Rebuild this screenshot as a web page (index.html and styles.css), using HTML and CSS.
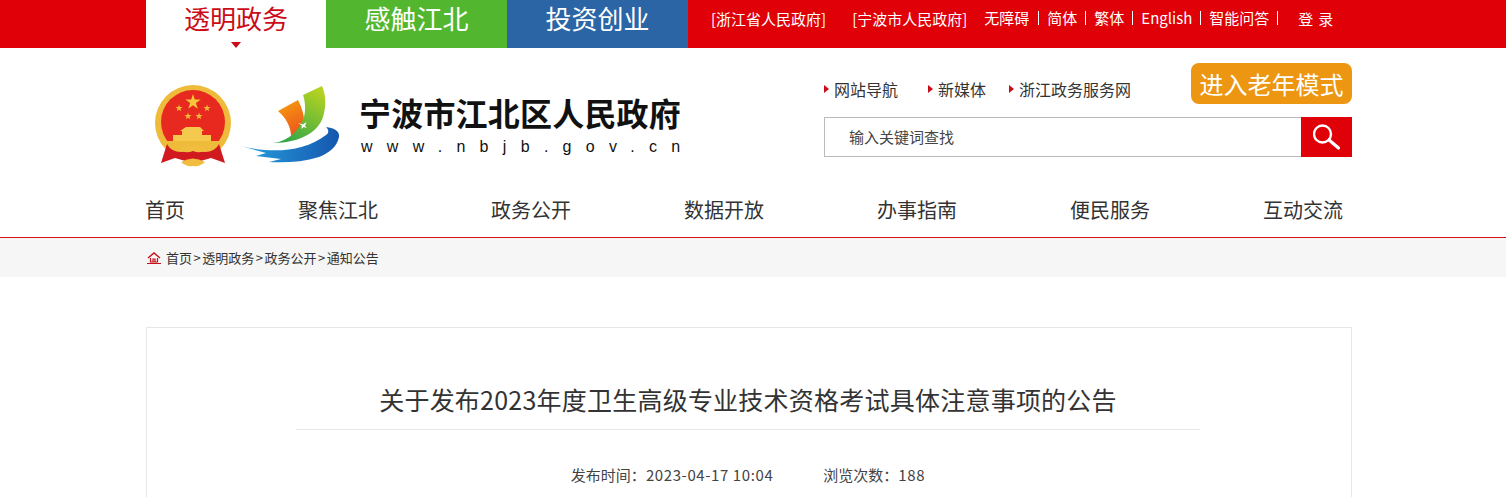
FILE: index.html
```html
<!DOCTYPE html>
<html lang="zh-CN">
<head>
<meta charset="utf-8">
<title>宁波市江北区人民政府</title>
<link rel="stylesheet" href="styles.css">
</head>
<body>
<div class="topbar">
  <div class="wrap topbar-in">
    <div class="tabs">
      <a class="tab tab-active">透明政务<i class="caret"></i></a>
      <a class="tab tab-green">感触江北</a>
      <a class="tab tab-blue">投资创业</a>
    </div>
    <div class="toplinks">
      <a class="gov gov-a">[浙江省人民政府]</a>
      <a class="gov gov-b">[宁波市人民政府]</a>
      <a class="tl">无障碍</a>
      <a class="tl">简体</a>
      <a class="tl">繁体</a>
      <a class="tl">English</a>
      <a class="tl">智能问答</a>
      <a class="login">登 录</a>
    </div>
  </div>
</div>
<header class="wrap head">
  <div class="logo">
    <svg class="emblem" width="80" height="84" viewBox="0 0 80 84">
      <circle cx="40" cy="39" r="38" fill="#efbb3a"/>
      <circle cx="40" cy="38" r="32" fill="#e8291f"/>
      <path d="M40 10 l1.800 5.600 h5.900 l-4.800 3.500 1.800 5.600 -4.700 -3.500 -4.700 3.500 1.800 -5.600 -4.800 -3.500 h5.900 Z" fill="#f6c63a"/>
      <path d="M26 20.500 l.9 2.600 h2.700 l-2.200 1.600 .8 2.600 -2.200 -1.600 -2.200 1.600 .8 -2.600 -2.200 -1.600 h2.700 Z M54 20.500 l.9 2.600 h2.700 l-2.200 1.600 .8 2.600 -2.200 -1.600 -2.200 1.600 .8 -2.600 -2.200 -1.600 h2.700 Z M35 28.500 l.9 2.600 h2.700 l-2.200 1.600 .8 2.600 -2.200 -1.600 -2.200 1.600 .8 -2.600 -2.200 -1.600 h2.700 Z M46 28.500 l.9 2.600 h2.700 l-2.200 1.600 .8 2.600 -2.200 -1.600 -2.200 1.600 .8 -2.600 -2.200 -1.600 h2.700 Z" fill="#f0b93a"/>
      <path d="M33 43 h14 l4 4 h-2 v4 h9 v6 H20 v-6 h9 v-4 h-2 Z" fill="#f5c94d"/>
      <path d="M10 57 H70 C68 62 64 66 60 69 H20 C16 66 12 62 10 57 Z" fill="#efbb3a"/>
      <path d="M14 60 C18 68 28 70 36 66 L44 66 C52 70 62 68 66 60 L72 79 L58 74 L44 78 L36 78 L22 74 L8 79 Z" fill="#d01a20"/>
      <path d="M26 66 q7 -7 14 -3 q7 -4 14 3 q-7 4 -14 1 q-7 3 -14 -1 Z M28 78 q12 -7 24 0 q-5 5 -12 4 q-7 1 -12 -4 Z" fill="#f0bd3f"/>
    </svg>
    <svg class="mark" width="100" height="80" viewBox="0 0 100 80">
      <defs>
        <linearGradient id="sailA" x1="0" y1="0" x2="0.400" y2="1"><stop offset="0" stop-color="#f5a30e"/><stop offset="1" stop-color="#ee5a1b"/></linearGradient>
        <linearGradient id="sailB" x1="0.700" y1="0" x2="0.200" y2="1"><stop offset="0" stop-color="#b4d221"/><stop offset="1" stop-color="#2fa54a"/></linearGradient>
        <linearGradient id="wave" x1="0" y1="0" x2="1" y2="0"><stop offset="0" stop-color="#27a0df"/><stop offset="1" stop-color="#1557ae"/></linearGradient>
      </defs>
      <path d="M37 26 L57 15 C62 25 63 31 63 35 C61 42 56 47 50 51 C50 42 45 33 37 26 Z" fill="url(#sailA)"/>
      <path d="M62 10 L81 1 C85 10 85 20 83 28 C80 46 60 58 32 58 C48 56 58 46 63 32 C65 24 64 16 62 10 Z" fill="url(#sailB)"/>
      <path d="M57 38 l5 1.500 3.500 -2.500 -1.500 4 2 2 -3.500 -1 -2 2 .3 -3.500 Z" fill="#fff"/>
      <path d="M0 61 C28 68 62 68 85 50 C88 48 88 45 85 42 C93 43 99 46 98 52 C96 62 88 68 78 72 C62 77 44 78 28 77 L40 74 L15 71 L25 68 Z" fill="url(#wave)"/>
    </svg>
    <div class="logo-text">
      <div class="logo-cn">宁波市江北区人民政府</div>
      <div class="logo-en">www.nbjb.gov.cn</div>
    </div>
  </div>
  <div class="head-right">
    <div class="quick">
      <div class="quick-links">
        <a class="q q1">网站导航</a>
        <a class="q q2">新媒体</a>
        <a class="q">浙江政务服务网</a>
      </div>
      <a class="elder">进入老年模式</a>
    </div>
    <div class="search">
      <div class="search-input">输入关键词查找</div>
      <div class="search-btn">
        <svg width="28" height="28" viewBox="0 0 28 28" fill="none" stroke="#fff">
          <circle cx="9.500" cy="11" r="8.500" stroke-width="2.400"/>
          <path d="M16 17 L25.500 25" stroke-width="3.200" stroke-linecap="round"/>
        </svg>
      </div>
    </div>
  </div>
</header>
<nav class="wrap nav">
  <a>首页</a><a>聚焦江北</a><a>政务公开</a><a>数据开放</a><a>办事指南</a><a>便民服务</a><a>互动交流</a>
</nav>
<div class="crumbs">
  <div class="wrap crumbs-in">
    <svg class="home" width="14" height="12" viewBox="0 0 14 12" fill="none" stroke="#c4101a">
      <path d="M1 6 L7 1 L13 6" stroke-width="1.400"/>
      <path d="M3.500 6 V10 H10.500 V6 M6 10 V7 H8 V10" stroke-width="1.200"/>
      <path d="M0 11.500 H14" stroke-width="1"/>
    </svg>
    <span>首页<b class="sep">&gt;</b>透明政务<b class="sep">&gt;</b>政务公开<b class="sep">&gt;</b>通知公告</span>
  </div>
</div>
<main class="wrap card">
  <h1 class="title">关于发布2023年度卫生高级专业技术资格考试具体注意事项的公告</h1>
  <div class="meta">
    <span>发布时间：<span class="num">2023-04-17 10:04</span></span>
    <span>浏览次数：<span class="num">188</span></span>
  </div>
</main>
</body>
</html>
```

FILE: styles.css
```css
* { box-sizing: border-box; }
html, body { margin: 0; padding: 0; height: 497px; overflow: hidden; background: #fff; }
body { font-family: "Noto Sans CJK SC", "Noto Sans", sans-serif; color: #333; }
a { color: inherit; text-decoration: none; }
.wrap { width: 1206px; margin-left: 146px; }

.topbar { height: 48px; background: #e00008; }
.topbar-in { display: flex; height: 48px; }
.tabs { display: flex; }
.tab { position: relative; display: block; width: 181px; height: 48px; line-height: 36px; text-align: center; font-size: 26px; color: #fff; }
.tab-active { width: 180px; background: #fff; color: #cb0c17; }
.tab-green { background: #52b62f; }
.tab-blue { background: #2b65a5; }
.caret { position: absolute; left: 85px; top: 42px; border: 5px solid transparent; border-top: 6px solid #cb0c17; border-bottom: 0; }
.toplinks { display: flex; align-items: center; height: 36px; font-size: 15px; color: #fff; white-space: nowrap; }
.gov-a { margin-left: 23px; }
.gov-b { margin-left: 26px; }
.tl { padding: 0 8px; line-height: 14px; border-right: 1px solid #fff; }
.gov-b + .tl { margin-left: 9px; padding-right: 9px; }
.login { margin-left: 20px; word-spacing: 1.500px; }

.head { display: flex; justify-content: space-between; height: 138px; }
.logo { display: flex; align-items: flex-start; }
.emblem { margin: 36px 0 0 7px; }
.mark { margin: 37px 0 0 8px; }
.logo-text { margin: 46px 0 0 18px; width: 330px; }
.logo-cn { font-size: 32px; line-height: 36px; font-weight: 700; letter-spacing: .2px; color: #111; white-space: nowrap; }
.logo-en { font-family: "Liberation Sans", sans-serif; font-size: 16px; line-height: 18px; letter-spacing: 14.300px; color: #111; margin: 8px 0 0 2px; white-space: nowrap; }
.head-right { width: 528px; padding-top: 15px; }
.quick { display: flex; justify-content: space-between; align-items: flex-start; height: 54px; }
.quick-links { display: flex; padding-top: 15px; font-size: 16px; line-height: 22px; color: #333; }
.q { position: relative; padding-left: 10px; margin-right: 30px; white-space: nowrap; }
.q2 { margin-right: 23px; }
.q::before { content: ""; position: absolute; left: 0; top: 7px; border: 4px solid transparent; border-left: 5px solid #cb0c17; border-right: 0; }
.elder { display: block; width: 161px; height: 41px; line-height: 42px; text-align: center; font-size: 24px; color: #fff; background: #ec9612; border-radius: 8px; white-space: nowrap; }
.search { display: flex; height: 40px; }
.search-input { flex: 1; border: 1px solid #bbb; border-right: 0; padding-left: 24px; line-height: 38px; font-size: 15px; color: #444; }
.search-btn { width: 51px; background: #e00008; display: flex; align-items: center; justify-content: center; }

.nav { display: flex; justify-content: space-between; margin-left: 145px; height: 51px; padding-right: 8px; font-size: 20px; line-height: 48px; color: #333; }
.crumbs { height: 40px; background: #f6f6f6; border-top: 1px solid #d40f1a; }
.crumbs-in { display: flex; align-items: center; height: 39px; font-size: 13px; color: #333; }
.home { margin: 1px 5px 0 1px; }
.sep { font-weight: 400; margin: 0 1.500px; }

.card { margin-top: 50px; height: 300px; border: 1px solid #e6e6e6; border-bottom: 0; padding: 0 151px 0 149px; }
.title { margin: 0; padding-top: 51px; height: 102px; line-height: 40px; font-size: 25px; font-weight: 400; letter-spacing: .23px; text-align: center; color: #333; border-bottom: 1px solid #e6e6e6; white-space: nowrap; }
.meta { display: flex; justify-content: center; gap: 50px; margin-top: 34px; font-size: 15px; line-height: 22px; color: #444; }
.num { letter-spacing: .6px; }
```
